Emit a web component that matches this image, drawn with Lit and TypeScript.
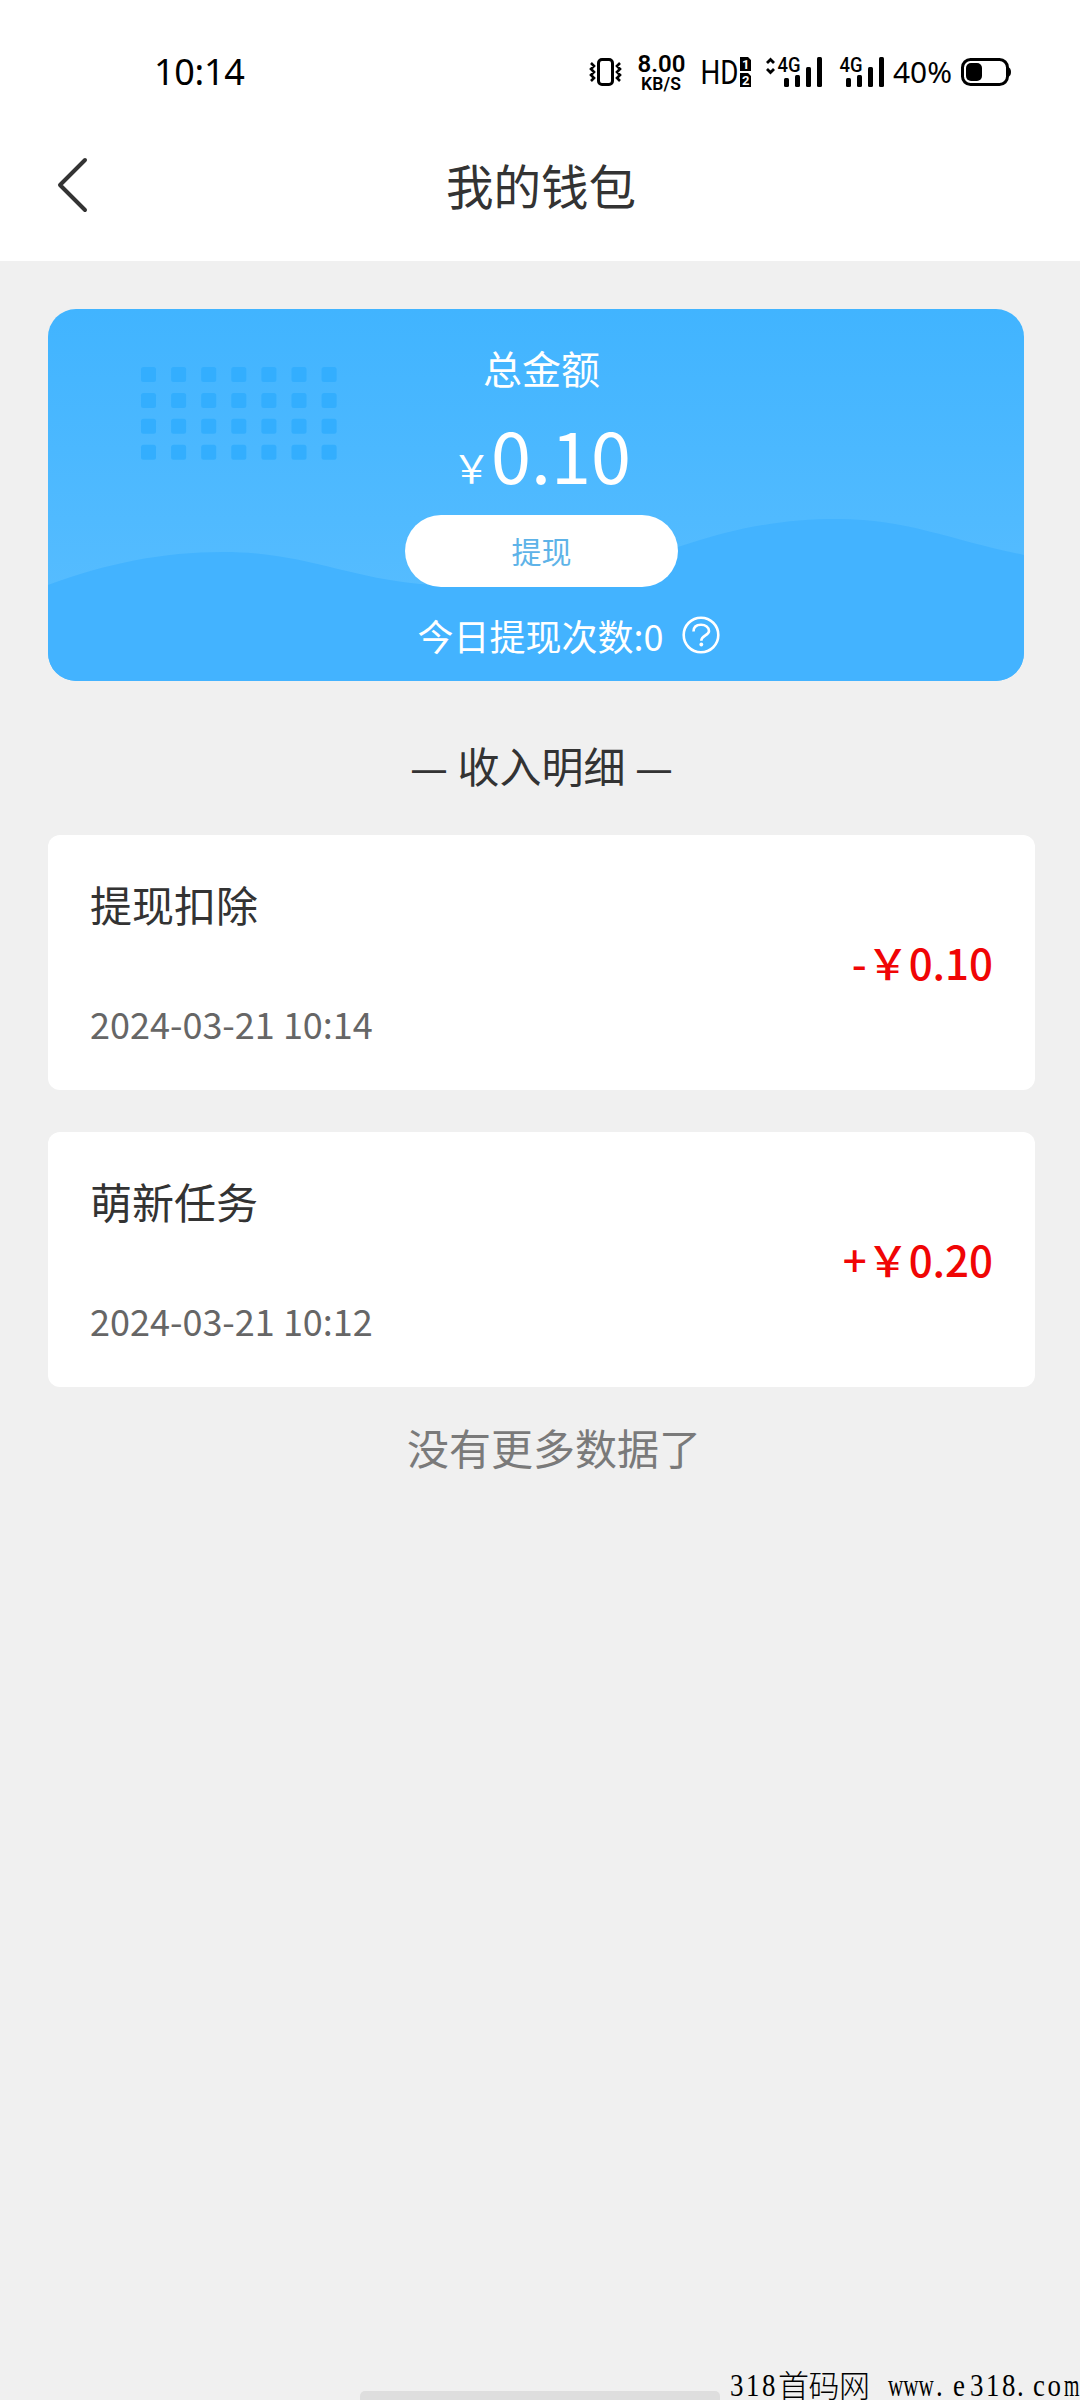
import { LitElement, html, css, svg } from "lit";
import { customElement, property } from "lit/decorators.js";

interface Entry {
  title: string;
  time: string;
  sign: string;
  amount: string;
}

const ENTRIES: Entry[] = [
  { title: "提现扣除", time: "2024-03-21 10:14", sign: "-", amount: "0.10" },
  { title: "萌新任务", time: "2024-03-21 10:12", sign: "+", amount: "0.20" },
];

const signalBars = (x: number) => svg`
  <rect x=${x} y="26" width="5" height="9" rx="1.5"/>
  <rect x=${x + 11} y="23" width="5" height="12" rx="1.5"/>
  <rect x=${x + 22} y="15" width="5" height="20" rx="1.5"/>
  <rect x=${x + 33} y="5" width="5" height="30" rx="1.5"/>`;

@customElement("status-bar")
class StatusBar extends LitElement {
  static styles = css`
    :host { display: flex; height: 112px; padding: 52px 68px 0 154px; box-sizing: border-box; color: #000; }
    .clock { font: 36px/40px "Noto Sans", sans-serif; letter-spacing: -0.3px; }
    .icons { display: flex; margin-left: auto; height: 40px; }
    svg { display: block; height: 40px; }
    .net { font-family: Roboto, sans-serif; }
    .pct { font-family: "Noto Sans", sans-serif; }
  `;
  render() {
    return html`
      <span class="clock">10:14</span>
      <div class="icons">
        <svg width="42" viewBox="588 0 42 40" fill="none" stroke="#000">
          <rect x="598.5" y="7.5" width="14" height="25" rx="3.5" stroke-width="3"/>
          <path d="M591 11l3 3-3 3 3 3-3 3 3 3-3 3M620 11l-3 3 3 3-3 3 3 3-3 3 3 3" stroke-width="2.6"/>
        </svg>
        <svg class="net" width="70" viewBox="630 0 70 40">
          <text x="637.5" y="20" font-size="24" font-weight="600" textLength="48">8.00</text>
          <text x="641" y="38" font-size="17.5" font-weight="600" textLength="40">KB/S</text>
        </svg>
        <svg class="net" width="60" viewBox="700 0 60 40">
          <text x="700.5" y="32" font-size="33" textLength="38" lengthAdjust="spacingAndGlyphs">HD</text>
          <path d="M740 5h8l3 3v11h-11zM740 21h8l3 3v11h-11z"/>
          <text x="742" y="17" font-size="13" font-weight="700" fill="#fff">1</text>
          <text x="742" y="33" font-size="13" font-weight="700" fill="#fff">2</text>
        </svg>
        <svg class="net" width="70" viewBox="760 0 70 40">
          <path d="M767 11l3.500-3.500 3.500 3.500M767 17l3.500 3.500 3.500-3.500" fill="none" stroke="#000" stroke-width="2.8"/>
          <text x="777.500" y="19.500" font-size="20" font-weight="500" textLength="23" lengthAdjust="spacingAndGlyphs">4G</text>
          ${signalBars(784)}
        </svg>
        <svg class="net" width="60" viewBox="830 0 60 40">
          <text x="839.500" y="19.500" font-size="20" font-weight="500" textLength="23" lengthAdjust="spacingAndGlyphs">4G</text>
          ${signalBars(846)}
        </svg>
        <svg class="pct" width="66" viewBox="890 0 66 40">
          <text x="893" y="30.500" font-size="28.500" textLength="59" lengthAdjust="spacingAndGlyphs">40%</text>
        </svg>
        <svg width="56" viewBox="956 0 56 40">
          <rect x="962.500" y="7.500" width="45" height="25" rx="8" fill="none" stroke="#000" stroke-width="3"/>
          <rect x="966" y="11" width="16" height="18" rx="5"/>
          <path d="M1008 15q3 1 3 5t-3 5z"/>
        </svg>
      </div>`;
  }
}

@customElement("nav-bar")
class NavBar extends LitElement {
  static styles = css`
    :host { display: grid; grid-template-columns: 120px 1fr 120px; align-items: center; height: 149px; padding-bottom: 4px; box-sizing: border-box; color: #333; }
    svg { display: block; margin: 0 0 0 52px; }
    .title { padding-left: 2px; font-size: 47.500px; line-height: 64px; text-align: center; }
  `;
  render() {
    return html`
      <svg width="40" height="60" viewBox="0 0 40 60" fill="none" stroke="#333" stroke-width="4" stroke-linecap="round" stroke-linejoin="round">
        <path d="M33 5L8 30L33 55"/>
      </svg>
      <div class="title">我的钱包</div>`;
  }
}

@customElement("balance-card")
class BalanceCard extends LitElement {
  static styles = css`
    :host { display: block; position: relative; width: 976px; height: 372px; border-radius: 28px; overflow: hidden; color: #fff; }
    .art { position: absolute; inset: 0; display: block; }
    .body { position: relative; display: flex; flex-direction: column; align-items: center; width: 987px; height: 372px; }
    .label { margin-top: 30px; font-size: 39px; line-height: 56px; }
    .sum { display: flex; align-items: baseline; margin-top: 6px; font-size: 72px; line-height: 104px; height: 104px; white-space: nowrap; }
    .sum small { font-size: 39px; transform: translateY(-1px); }
    .button { margin-top: 10px; width: 273px; height: 72px; border-radius: 36px; background: #fff; color: #5eb3e8; font-size: 30px; line-height: 70px; text-align: center; }
    .count { display: flex; align-items: center; margin-top: 22px; margin-left: 54px; gap: 18px; font-size: 36px; line-height: 52px; }
  `;
  render() {
    const dots = [0, 1, 2, 3].map((r) =>
      [0, 1, 2, 3, 4, 5, 6].map(
        (c) => svg`<rect x=${93 + c * 30.1} y=${58 + r * 25.9} width="15" height="15" rx="2.500"/>`
      )
    );
    return html`
      <svg class="art" width="976" height="372" viewBox="0 0 976 372">
        <defs>
          <linearGradient id="sky" x1="0" y1="0" x2="0" y2="280" gradientUnits="userSpaceOnUse">
            <stop offset="0" stop-color="#41b4ff"/>
            <stop offset="1" stop-color="#55bcff"/>
          </linearGradient>
        </defs>
        <rect width="976" height="372" fill="url(#sky)"/>
        <g fill="#33aefe">${dots}</g>
        <path fill="#43b3ff" d="M0 276C60 254 115 243 175 243C255 243 300 269 372 275C500 284 570 253 630 238C690 218 735 210 790 210C860 210 905 232 976 246V372H0Z"/>
      </svg>
      <div class="body">
        <div class="label">总金额</div>
        <div class="sum"><small>￥</small>0.10</div>
        <div class="button">提现</div>
        <div class="count">
          <span>今日提现次数:0</span>
          <svg width="38" height="38" viewBox="0 0 38 38" fill="none" stroke="#fff" stroke-width="2.600">
            <circle cx="19" cy="19" r="17.300"/>
            <path d="M11.500 15.500C11.500 11 14.500 8.700 19 8.700S27 11.300 27 15C27 19.500 19.300 19.500 19.300 24.800"/>
            <circle cx="19.300" cy="28.500" r="1.900" fill="#fff" stroke="none"/>
          </svg>
        </div>
      </div>`;
  }
}

@customElement("income-item")
class IncomeItem extends LitElement {
  @property({ attribute: false }) entry!: Entry;
  static styles = css`
    :host { display: flex; align-items: center; justify-content: space-between; height: 255px; padding: 0 42px 2px; box-sizing: border-box; border-radius: 12px; background: #fff; }
    .left { display: flex; flex-direction: column; gap: 63px; }
    .title { font-size: 42px; line-height: 60px; color: #333; }
    .time { font-size: 36px; line-height: 52px; color: #666; }
    .amount { font-size: 42px; line-height: 60px; font-weight: 500; color: #f00505; white-space: nowrap; }
  `;
  render() {
    const e = this.entry;
    return html`
      <div class="left">
        <div class="title">${e.title}</div>
        <div class="time">${e.time}</div>
      </div>
      <div class="amount">${e.sign}￥${e.amount}</div>`;
  }
}

@customElement("app-root")
class AppRoot extends LitElement {
  static styles = css`
    :host { display: flex; flex-direction: column; position: relative; width: 1080px; height: 2400px; overflow: hidden; background: #f0f0f0; font-family: "Noto Sans CJK SC", sans-serif; }
    .top { background: #fff; }
    .main { display: flex; flex-direction: column; padding: 48px 45px 0 48px; }
    .section { height: 60px; margin: 54px 0 40px; display: flex; justify-content: center; align-items: baseline; gap: 10px; font-size: 42px; line-height: 60px; color: #333; }
    .dash { font-family: "Noto Sans", sans-serif; font-size: 37px; transform: translateY(-2px); }
    .list { display: flex; flex-direction: column; gap: 42px; }
    .end { margin-top: 30px; padding-left: 25px; font-size: 42px; line-height: 60px; text-align: center; color: #7a7a7a; }
    .home { margin: auto 0 0 360px; width: 360px; height: 9px; border-radius: 5px 5px 0 0; background: #dedede; }
    .mark { position: absolute; right: 0; bottom: 0; display: block; overflow: visible; font-family: "Liberation Serif", serif; }
    .mark .cjk { font-family: "Noto Sans CJK SC", sans-serif; font-weight: 300; }
  `;
  render() {
    const glyph = (x: number, t: string, sx = 0.84) =>
      svg`<text transform="translate(${x} 2396) scale(${sx} 1)" font-size="32" letter-spacing="3.05">${t}</text>`;
    return html`
      <div class="top"><status-bar></status-bar><nav-bar></nav-bar></div>
      <div class="main">
        <balance-card></balance-card>
        <div class="section"><span class="dash">—</span><span>收入明细</span><span class="dash">—</span></div>
        <div class="list">${ENTRIES.map((e) => html`<income-item .entry=${e}></income-item>`)}</div>
        <div class="end">没有更多数据了</div>
      </div>
      <div class="home"></div>
      <svg class="mark" width="352" height="36" viewBox="728 2364 352 36">
        ${glyph(730, "318")}
        <text class="cjk" x="778" y="2397" font-size="31" textLength="92">首码网</text>
        <text transform="translate(888 2396) scale(.66 1)" font-size="32">www</text>
        ${glyph(936, ".")}
        ${glyph(953, "e")}
        ${glyph(970, "318")}
        ${glyph(1017, ".")}
        ${glyph(1033, "co")}
        <text transform="translate(1064 2396) scale(.62 1)" font-size="32">m</text>
      </svg>`;
  }
}
